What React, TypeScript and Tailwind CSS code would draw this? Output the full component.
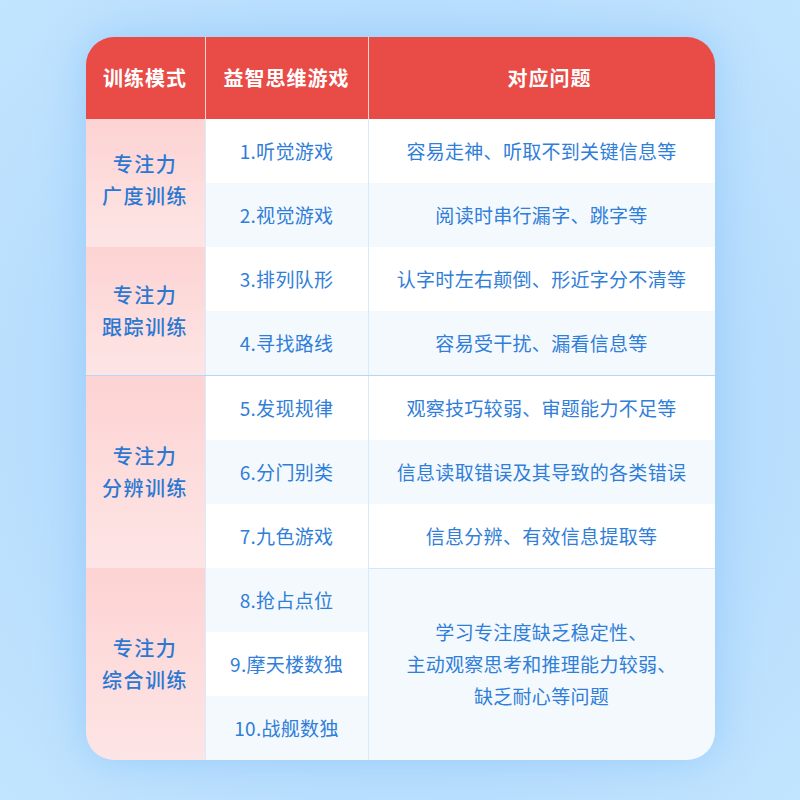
import React from "react";

const font = { fontFamily: '"Noto Sans CJK SC", "Noto Sans", sans-serif' };

type Group = {
  title: [string, string];
  games: string[];
  problems: string[] | null;
  merged?: string[];
  topLine?: boolean;
  titleShift?: string;
};

const groups: Group[] = [
  { title: ["专注力", "广度训练"], games: ["1.听觉游戏", "2.视觉游戏"], problems: ["容易走神、听取不到关键信息等", "阅读时串行漏字、跳字等"], titleShift: "pb-[6px]" },
  { title: ["专注力", "跟踪训练"], games: ["3.排列队形", "4.寻找路线"], problems: ["认字时左右颠倒、形近字分不清等", "容易受干扰、漏看信息等"] },
  { title: ["专注力", "分辨训练"], games: ["5.发现规律", "6.分门别类", "7.九色游戏"], problems: ["观察技巧较弱、审题能力不足等", "信息读取错误及其导致的各类错误", "信息分辨、有效信息提取等"], topLine: true },
  { title: ["专注力", "综合训练"], games: ["8.抢占点位", "9.摩天楼数独", "10.战舰数独"], problems: null, merged: ["学习专注度缺乏稳定性、", "主动观察思考和推理能力较弱、", "缺乏耐心等问题"] },
];

export default function App() {
  let rowIndex = 0;
  return (
    <div className="w-[800px] h-[800px] bg-[radial-gradient(ellipse_at_center,#a9d6fc_0%,#b6dcfd_55%,#c2e5fe_100%)] pt-[37px]" style={font}>
      <div className="mx-auto w-[629px] rounded-[28px] overflow-hidden shadow-[0_0_40px_rgba(140,195,250,0.7)]">
        {/* header */}
        <div className="flex h-[82px] bg-[#e94b46] text-white font-bold text-[20px] tracking-[1px]">
          <div className="w-[119px] flex items-center justify-center">训练模式</div>
          <div className="w-px bg-[#f8d4d3]" />
          <div className="w-[162px] flex items-center justify-center">益智思维游戏</div>
          <div className="w-px bg-[#f8d4d3]" />
          <div className="w-[346px] flex items-center justify-center pl-[16px]">对应问题</div>
        </div>
        {groups.map((g, gi) => {
          const startRow = rowIndex;
          rowIndex += g.games.length;
          return (
            <div key={gi} className={`flex ${g.topLine ? "border-t border-[#b4d7f6]" : ""}`}>
              <div className={`w-[119px] bg-gradient-to-b from-[#fdd3d3] to-[#fde5e5] flex flex-col items-center justify-center text-[#2b78d2] text-[20px] font-medium tracking-[1.5px] leading-[32px] ${g.titleShift ?? ""}`}>
                <div>{g.title[0]}</div>
                <div>{g.title[1]}</div>
              </div>
              <div className="w-px bg-[#d9ebfa]" />
              <div className="w-[162px] flex flex-col">
                {g.games.map((t, i) => (
                  <div
                    key={i}
                    className={`h-[64px] flex items-center justify-center text-[19px] tracking-[0.3px] text-[#2f7ed8] ${(startRow + i) % 2 === 0 ? "bg-white" : "bg-[#f4f9fe]"}`}
                  >
                    {t}
                  </div>
                ))}
              </div>
              <div className="w-px bg-[#d9ebfa]" />
              {g.problems ? (
                <div className="w-[346px] flex flex-col">
                  {g.problems.map((t, i) => (
                    <div
                      key={i}
                      className={`h-[64px] flex items-center justify-center text-[19px] tracking-[0.3px] text-[#2f7ed8] ${(startRow + i) % 2 === 0 ? "bg-white" : "bg-[#f4f9fe]"}`}
                    >
                      {t}
                    </div>
                  ))}
                </div>
              ) : (
                <div className="w-[346px] border-t border-[#d3e8fa] bg-[#f4f9fe] flex flex-col items-center justify-center text-[19px] tracking-[0.3px] leading-[32px] text-[#2f7ed8] pb-[2px]">
                  {g.merged!.map((t, i) => (
                    <div key={i}>{t}</div>
                  ))}
                </div>
              )}
            </div>
          );
        })}
      </div>
    </div>
  );
}
